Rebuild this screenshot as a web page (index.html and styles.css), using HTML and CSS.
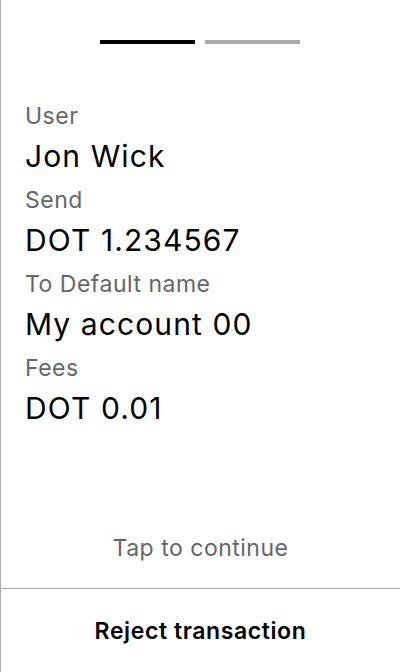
FILE: index.html
```html
<!DOCTYPE html>
<html>
<head>
<meta charset="utf-8">
<link rel="stylesheet" href="styles.css">
</head>
<body>
<div class="screen">
  <div class="progress">
    <div class="bar bar-active"></div>
    <div class="bar"></div>
  </div>
  <div class="details">
    <div class="item">
      <div class="label">User</div>
      <div class="value">Jon Wick</div>
    </div>
    <div class="item">
      <div class="label">Send</div>
      <div class="value">DOT 1.234567</div>
    </div>
    <div class="item">
      <div class="label">To Default name</div>
      <div class="value">My account 00</div>
    </div>
    <div class="item">
      <div class="label">Fees</div>
      <div class="value">DOT 0.01</div>
    </div>
  </div>
  <div class="spacer"></div>
  <div class="tap">Tap to continue</div>
  <div class="reject">Reject transaction</div>
</div>
</body>
</html>
```
FILE: styles.css
```css
html, body {
  margin: 0;
  padding: 0;
  background: #fff;
}
body {
  font-family: Inter, "Noto Sans", sans-serif;
  color: #000;
}
.screen {
  height: 672px;
  box-sizing: border-box;
  border-left: 1px solid #aaa;
  display: flex;
  flex-direction: column;
}
.progress {
  display: flex;
  justify-content: center;
  gap: 10px;
  padding-top: 40px;
  padding-right: 1px;
}
.bar {
  width: 95px;
  height: 4px;
  background: #aaa;
}
.bar-active {
  background: #000;
}
.details {
  padding: 59px 0 0 24px;
  display: flex;
  flex-direction: column;
}
.item {
  display: flex;
  flex-direction: column;
  gap: 8px;
  padding-bottom: 12px;
}
.label {
  font-size: 23px;
  line-height: 26px;
  letter-spacing: 0.5px;
  color: #666;
}
.value {
  font-size: 30px;
  line-height: 38px;
  letter-spacing: 1.1px;
  color: #000;
}
.spacer {
  flex: 1;
}
.tap {
  text-align: center;
  font-size: 23px;
  line-height: 26px;
  letter-spacing: 0.5px;
  color: #666;
  padding-bottom: 27px;
  border-bottom: 1px solid #aaa;
}
.reject {
  height: 83px;
  display: flex;
  align-items: center;
  justify-content: center;
  font-size: 23px;
  font-weight: 600;
  letter-spacing: 0.6px;
  color: #000;
}
```
